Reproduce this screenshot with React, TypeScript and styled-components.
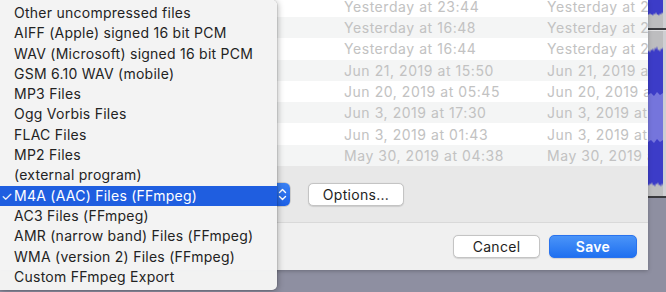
import React from "react";
import styled, { createGlobalStyle } from "styled-components";

const GlobalStyle = createGlobalStyle`
  html, body {
    margin: 0;
    padding: 0;
    background: #8e8fa1;
  }
  body {
    font-family: Inter, "Liberation Sans", sans-serif;
    -webkit-font-smoothing: antialiased;
  }
`;

const formats = [
  "Other uncompressed files",
  "AIFF (Apple) signed 16 bit PCM",
  "WAV (Microsoft) signed 16 bit PCM",
  "GSM 6.10 WAV (mobile)",
  "MP3 Files",
  "Ogg Vorbis Files",
  "FLAC Files",
  "MP2 Files",
  "(external program)",
  "M4A (AAC) Files (FFmpeg)",
  "AC3 Files (FFmpeg)",
  "AMR (narrow band) Files (FFmpeg)",
  "WMA (version 2) Files (FFmpeg)",
  "Custom FFmpeg Export",
];

const files = [
  ["Yesterday at 23:44", "Yesterday at 23:44"],
  ["Yesterday at 16:48", "Yesterday at 23:44"],
  ["Yesterday at 16:44", "Yesterday at 23:44"],
  ["Jun 21, 2019 at 15:50", "Jun 21, 2019 at 15:50"],
  ["Jun 20, 2019 at 05:45", "Jun 20, 2019 at 05:45"],
  ["Jun 3, 2019 at 17:30", "Jun 3, 2019 at 17:30"],
  ["Jun 3, 2019 at 01:43", "Jun 3, 2019 at 01:43"],
  ["May 30, 2019 at 04:38", "May 30, 2019 at 04:38"],
];

const Desktop = styled.div`
  position: relative;
  width: 666px;
  height: 292px;
  overflow: hidden;
  background: #8e8fa1;
  display: flex;
  align-items: flex-start;
`;

const Dialog = styled.div`
  width: 648px;
  height: 270px;
  flex-shrink: 0;
  display: flex;
  flex-direction: column;
  background: #f0f0f0;
  box-shadow: 0 1px 4px rgba(0, 0, 0, 0.25);
  position: relative;
  z-index: 1;
`;

const FileList = styled.div`
  height: 166px;
  overflow: hidden;
  background: #fff;
`;

const FileRows = styled.div`
  margin-top: -4.3px;
`;

const FileRow = styled.div<{ $alt: boolean }>`
  height: 21.3px;
  display: flex;
  align-items: center;
  background: ${(p) => (p.$alt ? "#f4f5f5" : "#fff")};
  font-size: 14px;
  letter-spacing: 0.55px;
  color: #c2c2c2;
  white-space: nowrap;
  overflow: hidden;
`;

const Cell = styled.span<{ $left: number; $w: number }>`
  margin-left: ${(p) => p.$left}px;
  width: ${(p) => p.$w}px;
  flex-shrink: 0;
  overflow: hidden;
`;

const Accessory = styled.div`
  height: 57px;
  background: #e8e8e8;
  border-bottom: 1px solid #d9d9d9;
  display: flex;
  align-items: center;
  gap: 18px;
  padding-left: 110px;
  box-sizing: border-box;
`;

const Popup = styled.div`
  width: 180px;
  height: 23px;
  border-radius: 5px;
  background: #fff;
  display: flex;
  justify-content: flex-end;
  overflow: hidden;
  box-shadow: 0 0 0 0.5px rgba(0, 0, 0, 0.25);
`;

const Stepper = styled.div`
  width: 16px;
  height: 23px;
  background: linear-gradient(#3b82f4, #1c5fe6);
  display: flex;
  align-items: center;
  justify-content: center;
`;

const Button = styled.div<{ $primary?: boolean; $w: number }>`
  width: ${(p) => p.$w}px;
  height: 23px;
  box-sizing: border-box;
  border-radius: 5px;
  display: flex;
  align-items: center;
  justify-content: center;
  font-size: 14px;
  letter-spacing: 0.3px;
  color: ${(p) => (p.$primary ? "#fff" : "#1e1e1e")};
  font-weight: ${(p) => (p.$primary ? 600 : 400)};
  background: ${(p) =>
    p.$primary ? "linear-gradient(#4b94f8, #1f70f0)" : "#fff"};
  border: 1px solid ${(p) => (p.$primary ? "#2a73ee" : "#c4c4c4")};
  box-shadow: 0 0.5px 1px rgba(0, 0, 0, 0.12);
`;

const Footer = styled.div`
  flex: 1;
  display: flex;
  justify-content: flex-end;
  align-items: flex-start;
  gap: 9px;
  padding: 12px 11px 0 0;
`;

const TrackPanel = styled.svg`
  flex-shrink: 0;
  display: block;
`;

const Menu = styled.div`
  position: absolute;
  left: 0;
  top: 0;
  width: 277px;
  height: 290px;
  box-sizing: border-box;
  padding-top: 3px;
  background: rgba(243, 243, 243, 0.99);
  border-radius: 0 5px 5px 0;
  box-shadow: 1px 1px 6px rgba(0, 0, 0, 0.28), 0 0 0 0.5px rgba(0, 0, 0, 0.15);
  z-index: 5;
`;

const MenuItem = styled.div<{ $selected?: boolean }>`
  position: relative;
  height: 20.3px;
  line-height: 20.3px;
  padding-left: 14px;
  font-size: 14px;
  letter-spacing: 0.25px;
  white-space: nowrap;
  color: ${(p) => (p.$selected ? "#fff" : "#232323")};
  background: ${(p) => (p.$selected ? "#1f5ee0" : "transparent")};
`;

const Check = styled.span`
  position: absolute;
  left: 1px;
  top: 0;
  font-size: 13px;
`;

function Waveform() {
  return (
    <TrackPanel width="18" height="198" viewBox="0 0 18 198">
      <rect x="0" y="0" width="18" height="198" fill="#bdbdbf" />
      <rect x="15" y="0" width="3" height="198" fill="#cfcfd2" />
      <path
        d="M0 0 H15 V14 L14 12 L13 15 L12 13 L11 16 L10 14 L9 15 L8 12 L7 15 L6 13 L5 16 L4 14 L3 15 L2 13 L1 15 L0 14 Z"
        fill="#3c3cc8"
      />
      <rect x="0" y="28" width="18" height="2" fill="#3a3a3e" />
      <rect x="0" y="30" width="18" height="1" fill="#e2e2e4" />
      <path
        d="M0 52 L1 50 L2 53 L3 49 L4 51 L5 48 L6 52 L7 47 L8 50 L9 46 L10 51 L11 49 L12 52 L13 48 L14 50 L15 47 V186 L14 183 L13 187 L12 184 L11 186 L10 182 L9 185 L8 183 L7 187 L6 184 L5 186 L4 182 L3 185 L2 183 L1 186 L0 184 Z"
        fill="#3c3cc8"
      />
      <path
        d="M0 95 L3 93 L6 96 L9 92 L12 95 L15 93 V140 L12 142 L9 139 L6 143 L3 140 L0 142 Z"
        fill="#7575dc"
      />
      <rect x="0" y="196" width="18" height="2" fill="#3a3a3e" />
    </TrackPanel>
  );
}

export default function App() {
  return (
    <>
      <GlobalStyle />
      <Desktop>
        <Dialog>
          <FileList>
            <FileRows>
              {files.map((f, i) => (
                <FileRow key={i} $alt={i % 2 === 1}>
                  <Cell $left={344} $w={203}>
                    {f[0]}
                  </Cell>
                  <Cell $left={0} $w={101}>
                    {f[1]}
                  </Cell>
                </FileRow>
              ))}
            </FileRows>
          </FileList>
          <Accessory>
            <Popup>
              <Stepper>
                <svg width="9" height="15" viewBox="0 0 9 15">
                  <path
                    d="M1.5 5.5 L4.5 2.5 L7.5 5.5 M1.5 9.5 L4.5 12.5 L7.5 9.5"
                    stroke="#fff"
                    strokeWidth="1.4"
                    fill="none"
                    strokeLinecap="round"
                    strokeLinejoin="round"
                  />
                </svg>
              </Stepper>
            </Popup>
            <Button $w={96}>Options...</Button>
          </Accessory>
          <Footer>
            <Button $w={87}>Cancel</Button>
            <Button $w={88} $primary>
              Save
            </Button>
          </Footer>
        </Dialog>
        <Waveform />
        <Menu>
          {formats.map((f) => (
            <MenuItem key={f} $selected={f.startsWith("M4A")}>
              {f.startsWith("M4A") && <Check>✓</Check>}
              {f}
            </MenuItem>
          ))}
        </Menu>
      </Desktop>
    </>
  );
}
